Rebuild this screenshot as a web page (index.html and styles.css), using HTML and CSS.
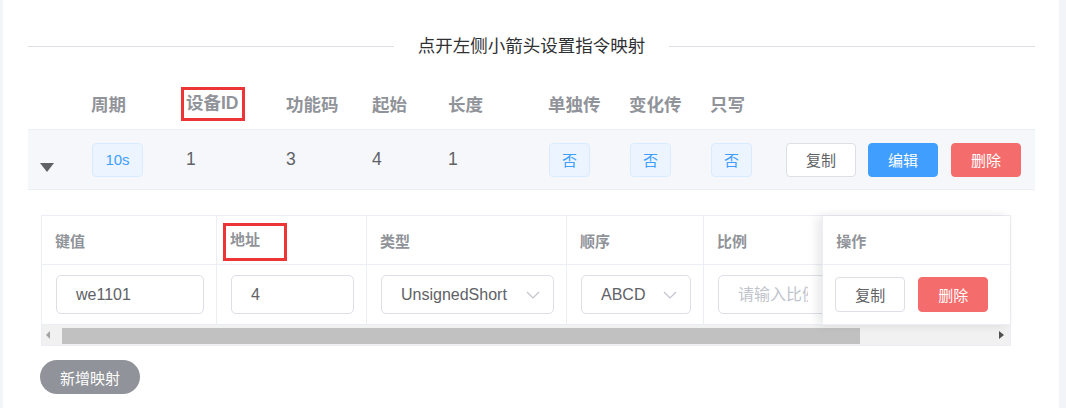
FILE: index.html
```html
<!DOCTYPE html>
<html lang="zh-CN">
<head>
  <meta charset="UTF-8">
  <title>指令映射</title>
  <link rel="stylesheet" href="styles.css">
</head>
<body>
  <div class="card">
    <div class="divider">
      <span class="divider-line"></span>
      <span class="divider-text">点开左侧小箭头设置指令映射</span>
      <span class="divider-line"></span>
    </div>

    <div class="row-grid main-head">
      <div></div>
      <div>周期</div>
      <div><span class="mark mark-id">设备ID</span></div>
      <div>功能码</div>
      <div>起始</div>
      <div>长度</div>
      <div>单独传</div>
      <div>变化传</div>
      <div>只写</div>
      <div></div>
    </div>

    <div class="row-grid main-row">
      <div class="arrow-cell"><span class="caret"></span></div>
      <div><span class="tag tag-period">10s</span></div>
      <div>1</div>
      <div>3</div>
      <div>4</div>
      <div>1</div>
      <div><span class="tag">否</span></div>
      <div><span class="tag">否</span></div>
      <div><span class="tag">否</span></div>
      <div class="actions">
        <button class="btn btn-plain">复制</button>
        <button class="btn btn-primary">编辑</button>
        <button class="btn btn-danger">删除</button>
      </div>
    </div>

    <div class="expand">
      <div class="sub-table">
        <div class="sub-body">
          <div class="sub-scroll">
            <div class="sub-row sub-head">
              <div class="cell col-key">键值</div>
              <div class="cell col-addr"><span class="mark mark-addr">地址</span></div>
              <div class="cell col-type">类型</div>
              <div class="cell col-order">顺序</div>
              <div class="cell col-ratio">比例</div>
            </div>
            <div class="sub-row sub-data">
              <div class="cell col-key"><input class="field" type="text" value="we1101"></div>
              <div class="cell col-addr"><input class="field" type="text" value="4"></div>
              <div class="cell col-type">
                <div class="field select">
                  <span>UnsignedShort</span>
                  <svg class="chev" width="14" height="8" viewBox="0 0 14 8"><polyline points="1,1 7,7 13,1" fill="none" stroke="#c0c4cc" stroke-width="1.2"/></svg>
                </div>
              </div>
              <div class="cell col-order">
                <div class="field select">
                  <span>ABCD</span>
                  <svg class="chev" width="14" height="8" viewBox="0 0 14 8"><polyline points="1,1 7,7 13,1" fill="none" stroke="#c0c4cc" stroke-width="1.2"/></svg>
                </div>
              </div>
              <div class="cell col-ratio"><input class="field" type="text" placeholder="请输入比例"></div>
            </div>
          </div>
          <div class="sub-fixed">
            <div class="cell fixed-head">操作</div>
            <div class="cell fixed-data">
              <button class="btn btn-plain btn-sm">复制</button>
              <button class="btn btn-danger btn-sm">删除</button>
            </div>
          </div>
        </div>
        <div class="hscroll">
          <span class="sb-arrow sb-left"></span>
          <span class="sb-thumb"></span>
          <span class="sb-arrow sb-right"></span>
        </div>
      </div>

      <button class="btn-add">新增映射</button>
    </div>
  </div>
</body>
</html>
```

FILE: styles.css
```css
body {
  margin: 0;
  background-color: #f3f4f8;
  font-family: "Liberation Sans", "Noto Sans CJK SC", sans-serif;
  color: #606266;
}
.card {
  margin: 0 7px 0 3px;
  height: 408px;
  padding: 0 24px 0 25px;
  background-color: #fff;
  overflow: hidden;
}

/* divider */
.divider {
  display: flex;
  align-items: center;
  height: 24px;
  padding-top: 34px;
}
.divider-line {
  flex: 1;
  height: 1px;
  background-color: #dcdfe6;
}
.divider-text {
  padding: 0 24px 0 24px;
  font-size: 17.5px;
  color: #303133;
  line-height: 24px;
}

/* main table */
.row-grid {
  display: grid;
  grid-template-columns: 63px 95px 100px 86px 76px 100px 81px 81px 76px 1fr;
  align-items: center;
}
.main-head {
  height: 52px;
  margin-top: 19px;
  font-size: 17.5px;
  font-weight: bold;
  color: #909399;
}
.main-row {
  box-sizing: border-box;
  height: 61px;
  border-top: 1px solid #ebeef5;
  border-bottom: 1px solid #ebeef5;
  background-color: #f5f7fa;
  font-size: 17.5px;
  color: #606266;
}
.arrow-cell {
  padding-left: 12px;
  margin-top: 16px;
}
.caret {
  display: block;
  width: 0;
  height: 0;
  border-left: 7.5px solid transparent;
  border-right: 7.5px solid transparent;
  border-top: 9px solid #5f6166;
}
.tag {
  display: inline-flex;
  align-items: center;
  justify-content: center;
  box-sizing: border-box;
  width: 41px;
  height: 34px;
  margin-left: 1px;
  background-color: #ecf5ff;
  border: 1px solid #d9ecff;
  border-radius: 4px;
  color: #409eff;
  font-size: 15px;
}
.tag-period {
  width: 51px;
}
.actions {
  display: flex;
}
.btn {
  box-sizing: border-box;
  width: 70px;
  height: 34px;
  margin-right: 12px;
  padding: 0;
  border: 1px solid #dcdfe6;
  border-radius: 4px;
  font-family: "Liberation Sans", "Noto Sans CJK SC", sans-serif;
  font-size: 15px;
  cursor: pointer;
}
.btn-plain {
  background-color: #fff;
  color: #606266;
}
.btn-primary {
  background-color: #409eff;
  border-color: #409eff;
  color: #fff;
  margin-right: 13px;
}
.btn-danger {
  background-color: #f56c6c;
  border-color: #f56c6c;
  color: #fff;
}
.btn-sm {
  height: 35px;
  margin-right: 13px;
}

/* red annotation boxes */
.mark {
  position: relative;
  display: inline-block;
  line-height: 20px;
}
.mark::after {
  content: "";
  position: absolute;
  border: 3px solid #ee3535;
}
.mark-id::after {
  left: -5px;
  right: -6px;
  top: -6px;
  bottom: -8px;
}
.mark-addr::after {
  left: -7px;
  right: -27px;
  top: -7px;
  bottom: -11px;
}

/* expanded mapping table */
.expand {
  padding: 25px 0 0 13px;
}
.sub-table {
  width: 968px;
  border: 1px solid #ebeef5;
}
.sub-body {
  display: flex;
}
.sub-scroll {
  width: 781px;
  overflow: hidden;
}
.sub-row {
  display: flex;
  width: 812px;
}
.cell {
  box-sizing: border-box;
  display: flex;
  align-items: center;
  flex-shrink: 0;
  border-bottom: 1px solid #ebeef5;
  border-right: 1px solid #ebeef5;
}
.sub-head .cell,
.fixed-head {
  height: 49px;
  padding-left: 13px;
  font-size: 15px;
  font-weight: bold;
  color: #909399;
}
.sub-data .cell {
  height: 60px;
  padding: 0 12px 0 14px;
}
.col-key { width: 175px; }
.col-addr { width: 150px; }
.col-type { width: 200px; }
.col-order { width: 137px; }
.col-ratio { width: 137px; }
.field {
  box-sizing: border-box;
  width: 100%;
  height: 39px;
  padding: 0 19px 0 19px;
  border: 1px solid #dcdfe6;
  border-radius: 5px;
  font-family: "Liberation Sans", "Noto Sans CJK SC", sans-serif;
  font-size: 16px;
  color: #606266;
  outline: none;
}
.field::placeholder {
  color: #c0c4cc;
}
.select {
  display: flex;
  align-items: center;
  justify-content: space-between;
  padding-right: 13px;
}
.chev {
  display: block;
}
.sub-fixed {
  position: relative;
  width: 187px;
  background-color: #fff;
  border-left: 1px solid #ebeef5;
  box-shadow: -4px 0 10px rgba(0, 0, 0, 0.1);
}
.sub-fixed .cell {
  border-right: none;
}
.fixed-data {
  height: 60px;
  padding-left: 12px;
}

/* horizontal scrollbar */
.hscroll {
  display: flex;
  align-items: center;
  height: 20px;
  background-color: #f1f1f1;
}
.sb-arrow {
  width: 0;
  height: 0;
  border-top: 4px solid transparent;
  border-bottom: 4px solid transparent;
}
.sb-left {
  margin-left: 4px;
  border-right: 4px solid #a3a3a3;
}
.sb-thumb {
  width: 798px;
  height: 16px;
  margin-left: 12px;
  margin-top: 2px;
  background-color: #c1c1c1;
}
.sb-right {
  margin-left: auto;
  margin-right: 6px;
  border-left: 5px solid #505050;
}

.btn-add {
  width: 100px;
  height: 34px;
  margin: 14px 0 0 -1px;
  padding: 0;
  border: none;
  border-radius: 17px;
  background-color: #909399;
  color: #fff;
  font-family: "Liberation Sans", "Noto Sans CJK SC", sans-serif;
  font-size: 15px;
  cursor: pointer;
}
```
